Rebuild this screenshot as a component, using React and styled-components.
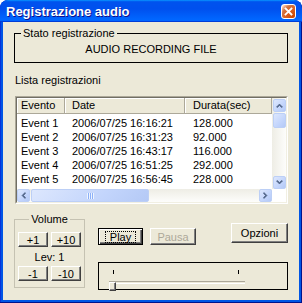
import React from 'react';
import styled, { createGlobalStyle } from 'styled-components';

const GlobalStyle = createGlobalStyle`
  html, body { margin: 0; padding: 0; background: #fff; }
  body { font-family: "Liberation Sans", Arial, sans-serif; font-size: 11px; color: #000; }
`;

const events = [
  { name: 'Event 1', date: '2006/07/25 16:16:21', dur: '128.000' },
  { name: 'Event 2', date: '2006/07/25 16:31:23', dur: '92.000' },
  { name: 'Event 3', date: '2006/07/25 16:43:17', dur: '116.000' },
  { name: 'Event 4', date: '2006/07/25 16:51:25', dur: '292.000' },
  { name: 'Event 5', date: '2006/07/25 16:56:45', dur: '228.000' },
];

const Window = styled.div`
  width: 302px;
  height: 303px;
  box-sizing: border-box;
  display: flex;
  flex-direction: column;
  padding: 0 3px 3px;
  background: #0055e5;
  border-radius: 8px 8px 0 0;
  box-shadow: inset -1px -1px #00138c, inset 1px 1px #0831d9;
  overflow: hidden;
`;

const TitleBar = styled.div`
  height: 22px;
  margin: 0 -3px;
  padding: 0 6px 0 6px;
  display: flex;
  align-items: center;
  justify-content: space-between;
  background: linear-gradient(180deg, #0997ff 0%, #0053ee 8%, #0050ee 40%, #0066ff 88%, #0066ff 93%, #005bff 95%, #003dd7 96%, #003dd7 100%);
  border-radius: 8px 8px 0 0;
`;

const Title = styled.span`
  font: bold 13px "Liberation Sans", Arial, sans-serif;
  color: #fff;
  text-shadow: 1px 1px #0f1089;
  margin-top: 1px;
`;

const CloseBtn = styled.div`
  width: 15px;
  height: 15px;
  box-sizing: border-box;
  border: 1px solid #fff;
  border-radius: 3px;
  display: flex;
  align-items: center;
  justify-content: center;
  background: radial-gradient(circle at 90% 90%, #cc4600 0%, #dc6527 55%, #cd7546 70%, #ffccb2 90%, #fff 100%);
  margin-top: 1px;
`;

const Body = styled.div`
  flex: 1;
  background: #ece9d8;
  padding: 5px 11px 0;
  display: flex;
  flex-direction: column;
`;

const Group = styled.fieldset`
  margin: 0;
  padding: 0 ${p => p.$pad || 0}px;
  min-width: 0;
  box-sizing: border-box;
  height: ${p => p.$h}px;
  width: ${p => (p.$w ? `${p.$w}px` : 'auto')};
  border: 1px solid ${p => p.$line || '#000'};
`;

const Legend = styled.legend`
  padding: 0 2px;
  margin: ${p => (p.$center ? '0 auto' : '0 0 0 6px')};
  line-height: 13px;
`;

const StatusText = styled.div`
  text-align: center;
  margin-top: 3px;
  line-height: 13px;
`;

const Label = styled.div`
  margin: 11px 0 0 1px;
  line-height: 13px;
`;

const ListFrame = styled.div`
  margin: 9px 0 0 1px;
  border: 1px solid;
  border-color: #aca899 #fff #fff #aca899;
`;

const ListInner = styled.div`
  border: 1px solid;
  border-color: #716f64 #f1efe2 #f1efe2 #716f64;
  background: #fff;
  display: flex;
  flex-direction: column;
`;

const ListMain = styled.div`
  display: flex;
  height: 91px;
`;

const ListContent = styled.div`
  flex: 1;
  overflow: hidden;
`;

const Cols = styled.div`
  display: grid;
  grid-template-columns: 48px 120px 1fr;
`;

const HeadCell = styled.div`
  height: 16px;
  box-sizing: border-box;
  line-height: 15px;
  padding-left: ${p => p.$pad}px;
  background: #ece9d8;
  box-shadow: inset -1px -1px #aca899, inset 1px 1px #fff;
  white-space: nowrap;
`;

const Rows = styled.div`
  padding-top: 2px;
`;

const Cell = styled.div`
  height: 14px;
  line-height: 14px;
  padding-left: ${p => p.$pad}px;
  white-space: nowrap;
`;

const VScroll = styled.div`
  width: 14px;
  display: flex;
  flex-direction: column;
  background: linear-gradient(90deg, #eeede5, #fdfdfb);
`;

const HScroll = styled.div`
  height: 13px;
  display: flex;
  background: linear-gradient(180deg, #eeede5, #fdfdfb);
`;

const ScrollBtn = styled.div`
  width: ${p => p.$w}px;
  height: ${p => p.$h}px;
  box-sizing: border-box;
  margin: ${p => p.$m || '0'};
  border: 1px solid #bccff6;
  border-radius: 2px;
  background: linear-gradient(135deg, #dde7fd 0%, #c3d5fc 60%, #b4c9f6 100%);
  display: flex;
  align-items: center;
  justify-content: center;
`;

const Track = styled.div`
  flex: 1;
`;

const Grip = styled.span`
  width: 7px;
  height: 6px;
  background: repeating-linear-gradient(90deg, #eef4fe 0 1px, #8cb0f8 1px 2px);
`;

const Corner = styled.div`
  width: 14px;
  background: #fff;
`;

const BottomRow = styled.div`
  display: flex;
  gap: 13px;
  margin-top: 9px;
  align-items: flex-start;
`;

const BtnGrid = styled.div`
  display: grid;
  grid-template-columns: 30px 30px;
  gap: 3px;
  margin-top: ${p => p.$top}px;
`;

const Button = styled.button`
  width: ${p => p.$w}px;
  height: ${p => p.$h}px;
  margin-top: ${p => p.$top || 0}px;
  margin-left: ${p => p.$left || '0'};
  padding: 0;
  box-sizing: border-box;
  font: 11px "Liberation Sans", Arial, sans-serif;
  color: ${p => (p.disabled ? '#aca899' : '#000')};
  background: #ece9d8;
  border: 1px solid;
  border-color: #fff #404040 #404040 #fff;
  box-shadow: inset -1px -1px #808080;
  display: flex;
  align-items: center;
  justify-content: center;
  outline: ${p => (p.$default ? '1px solid #000' : 'none')};
  outline-offset: 0;
`;

const DefaultButton = styled(Button)`
  border-color: #000;
  box-shadow: inset 1px 1px #fff, inset -1px -1px #404040, inset -2px -2px #808080;
`;

const Focus = styled.span`
  border: 1px dotted #000;
  padding: 0 4px;
  line-height: 10px;
`;

const LevText = styled.div`
  text-align: center;
  line-height: 13px;
  margin-top: 4px;
`;

const RightCol = styled.div`
  flex: 1;
  padding-top: 10px;
`;

const ButtonRow = styled.div`
  display: flex;
  align-items: flex-start;
`;

const SliderBox = styled.div`
  margin-top: 17px;
  height: 28px;
  box-sizing: border-box;
  border: 1px solid #000;
  padding: 7px 42px 0 10px;
`;

const Ticks = styled.div`
  display: flex;
  justify-content: space-between;
  padding: 0 6px 0 4px;
`;

const Tick = styled.span`
  width: 1px;
  height: 4px;
  background: #000;
`;

const SliderTrack = styled.div`
  position: relative;
  height: 11px;
`;

const TrackLine = styled.div`
  margin-top: 7px;
  height: 1px;
  border-top: 1px solid #aca899;
  border-bottom: 1px solid #fff;
`;

const Thumb = styled.div`
  position: absolute;
  left: 0;
  top: 1px;
  width: 7px;
  height: 9px;
  box-sizing: border-box;
  background: #ece9d8;
  border: 1px solid;
  border-color: #fff #404040 #404040 #fff;
  box-shadow: inset -1px -1px #808080;
`;

const Arrow = ({ dir }) => {
  const rot = { up: 0, down: 180, left: 270, right: 90 }[dir];
  return (
    <svg width="7" height="7" viewBox="0 0 7 7" style={{ transform: `rotate(${rot}deg)` }}>
      <path d="M0.5 5 L3.5 2 L6.5 5 L5.5 5.5 L3.5 3.5 L1.5 5.5 Z" fill="#4d6185" stroke="#4d6185" strokeWidth="0.6" />
    </svg>
  );
};

const columns = [
  { title: 'Evento', key: 'name', pad: 4 },
  { title: 'Date', key: 'date', pad: 7 },
  { title: 'Durata(sec)', key: 'dur', pad: 8 },
];

export default function App() {
  return (
    <>
      <GlobalStyle />
      <Window>
        <TitleBar>
          <Title>Registrazione audio</Title>
          <CloseBtn>
            <svg width="9" height="9" viewBox="0 0 9 9">
              <path d="M1.5 1.5 L7.5 7.5 M7.5 1.5 L1.5 7.5" stroke="#fff" strokeWidth="1.8" strokeLinecap="square" />
            </svg>
          </CloseBtn>
        </TitleBar>
        <Body>
          <Group $h={36}>
            <Legend>Stato registrazione</Legend>
            <StatusText>AUDIO RECORDING FILE</StatusText>
          </Group>

          <Label>Lista registrazioni</Label>

          <ListFrame>
            <ListInner>
              <ListMain>
                <ListContent>
                  <Cols>
                    {columns.map(c => (
                      <HeadCell key={c.key} $pad={c.pad}>{c.title}</HeadCell>
                    ))}
                  </Cols>
                  <Rows>
                    {events.map(ev => (
                      <Cols key={ev.name}>
                        {columns.map(c => (
                          <Cell key={c.key} $pad={c.pad}>{ev[c.key]}</Cell>
                        ))}
                      </Cols>
                    ))}
                  </Rows>
                </ListContent>
                <VScroll>
                  <ScrollBtn $w={13} $h={13} $m="1px 0 0 1px"><Arrow dir="up" /></ScrollBtn>
                  <ScrollBtn $w={13} $h={15} $m="1px 0 0 1px" />
                  <Track />
                  <ScrollBtn $w={13} $h={13} $m="0 0 0 1px"><Arrow dir="down" /></ScrollBtn>
                </VScroll>
              </ListMain>
              <HScroll>
                <ScrollBtn $w={13} $h={13}><Arrow dir="left" /></ScrollBtn>
                <ScrollBtn $w={118} $h={13} $m="0 0 0 1px"><Grip /></ScrollBtn>
                <Track />
                <ScrollBtn $w={13} $h={13}><Arrow dir="right" /></ScrollBtn>
                <Corner />
              </HScroll>
            </ListInner>
          </ListFrame>

          <BottomRow>
            <Group $h={75} $w={71} $pad={3} $line="#c5c2b2">
              <Legend $center>Volume</Legend>
              <BtnGrid $top={6}>
                <Button $w={30} $h={15}>+1</Button>
                <Button $w={30} $h={15}>+10</Button>
              </BtnGrid>
              <LevText>Lev: 1</LevText>
              <BtnGrid $top={2}>
                <Button $w={30} $h={15}>-1</Button>
                <Button $w={30} $h={15}>-10</Button>
              </BtnGrid>
            </Group>

            <RightCol>
              <ButtonRow>
                <DefaultButton $w={45} $h={17} $top={5}>
                  <Focus>Play</Focus>
                </DefaultButton>
                <Button $w={46} $h={17} $top={5} $left="7px" disabled>Pausa</Button>
                <Button $w={57} $h={20} $left="auto">Opzioni</Button>
              </ButtonRow>
              <SliderBox>
                <Ticks>
                  <Tick />
                  <Tick />
                </Ticks>
                <SliderTrack>
                  <TrackLine />
                  <Thumb />
                </SliderTrack>
              </SliderBox>
            </RightCol>
          </BottomRow>
        </Body>
      </Window>
    </>
  );
}
